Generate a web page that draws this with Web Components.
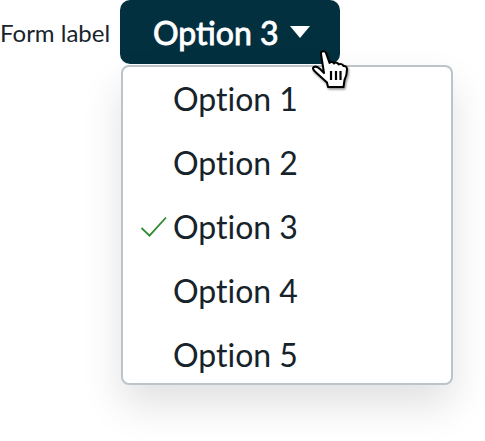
<!DOCTYPE html>
<html><head><meta charset="utf-8"><title>Dropdown</title>
<style>
html,body{margin:0;background:#fff;overflow:hidden}
body{font-family:Lato,"Noto Sans",sans-serif;color:#0f1c24}
</style></head><body>
<dd-select label="Form label" value="Option 3">
<dd-option>Option 1</dd-option>
<dd-option>Option 2</dd-option>
<dd-option selected>Option 3</dd-option>
<dd-option>Option 4</dd-option>
<dd-option>Option 5</dd-option>
</dd-select>
<script>
class DdOption extends HTMLElement{
  constructor(){super();this.attachShadow({mode:'open'}).innerHTML=`<style>
  :host{display:flex;align-items:center;height:64px;font-size:32px;line-height:40px;color:#16232b;font-variant-ligatures:none}
  .tick{width:50px;display:flex;padding-left:18px;box-sizing:border-box;flex:none;height:24px}
  svg{display:block;visibility:hidden}
  :host([selected]) svg{visibility:visible}
  </style><span class="tick"><svg width="26" height="24" viewBox="0 0 26 24"><path d="M.5 13 L8.500 20.700 L25 2.500" fill="none" stroke="#2e8b2c" stroke-width="1.800"/></svg></span><span class="txt"><slot></slot></span>`;}
}
customElements.define('dd-option',DdOption);
class DdSelect extends HTMLElement{
  constructor(){super();const label=this.getAttribute('label'),value=this.getAttribute('value');
  this.attachShadow({mode:'open'}).innerHTML=`<style>
  :host{display:flex;align-items:flex-start;width:485px;height:441px;font-family:Lato,"Noto Sans",sans-serif}
  .label{font-size:24px;line-height:64px;padding-top:1px;width:120px;box-sizing:border-box;color:#17242c;flex:none}
  .col{position:relative;display:flex;flex-direction:column;align-items:flex-start}
  .btn{width:220px;height:64px;border-radius:10px;background:#03303f;color:#fff;display:flex;align-items:center;gap:11px;font-size:32px;font-weight:400;-webkit-text-stroke:.9px #fff;padding-left:33px;box-sizing:border-box}
  .menu{margin:1px 0 0 1px;width:332px;height:320px;box-sizing:border-box;border:2px solid #bdc4c9;border-radius:8px;background:#fff;box-shadow:0 20px 40px rgba(0,0,0,.12)}
  .cursor{position:absolute;left:191px;top:50px}
  </style>
  <div class="label">${label}</div>
  <div class="col">
    <div class="btn"><span>${value}</span><svg width="20" height="12" viewBox="0 0 20 12"><path d="M0 0H20L10 12Z" fill="#fff"/></svg></div>
    <div class="menu"><slot></slot></div>
    <svg class="cursor" width="42" height="44" viewBox="0 0 42 44">
      <defs><filter id="s" x="-20%" y="-20%" width="150%" height="150%"><feDropShadow dx="1" dy="1.500" stdDeviation="1" flood-opacity=".45"/></filter></defs>
      <path filter="url(#s)" d="M10 4c-.5-3 4-4 5-1l3.500 10c1-1.500 3.500-1.500 4.500.5 1-1.500 4-1 4.500 1 1.500-1 4-.5 5 1.500 1.500-.5 3.500 1 3.500 3 0 4-1 8-2.500 11l-1 7H17l-1-4.500-11-10C2 20 1 18 3 17c2-1 4 0 6 2l4 4z" fill="#fff" stroke="#000" stroke-width="2" stroke-linejoin="round"/>
      <path d="M20 21v9M25 21v9M29.500 21v9" stroke="#000" stroke-width="2.200" fill="none"/>
    </svg>
  </div>`;}
}
customElements.define('dd-select',DdSelect);
</script>
</body></html>
